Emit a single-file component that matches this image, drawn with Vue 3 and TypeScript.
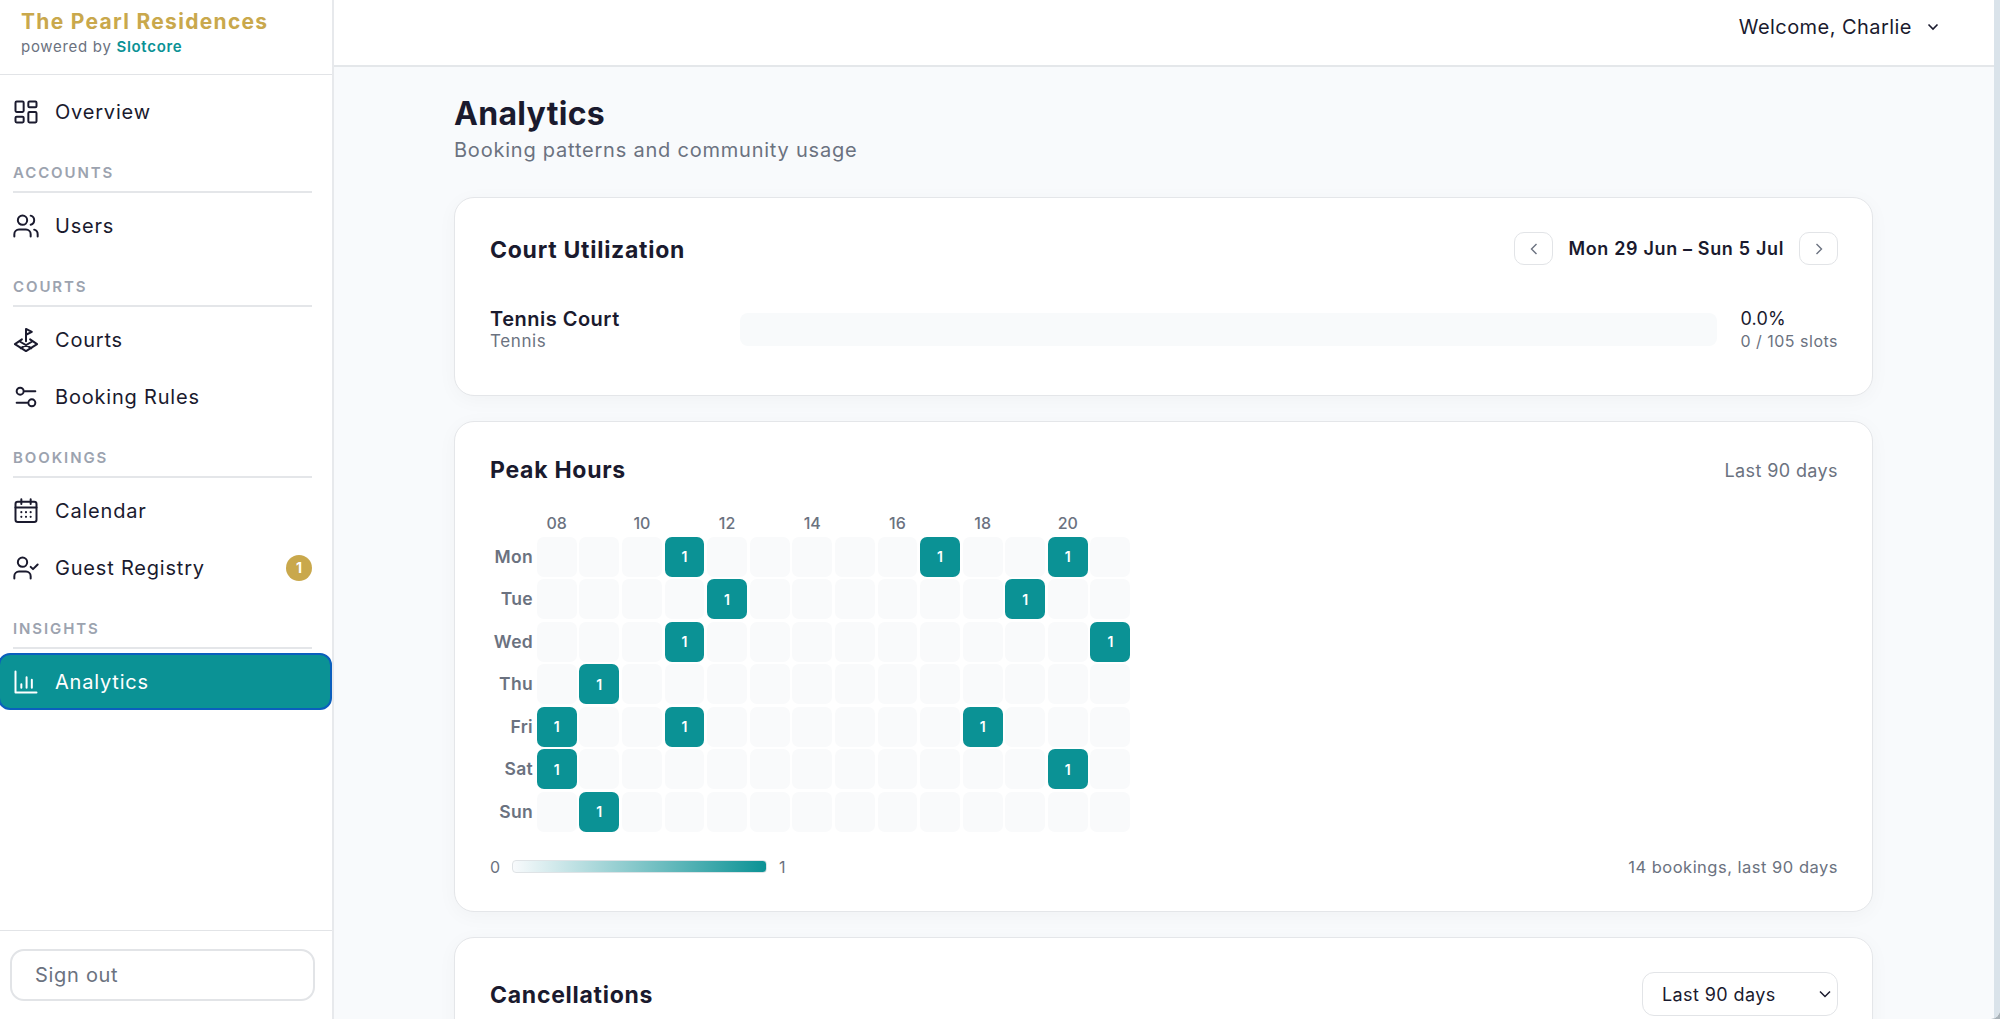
<script setup lang="ts">
const hours = Array.from({ length: 14 }, (_, i) => i + 8)

const heat: { day: string; booked: number[] }[] = [
  { day: 'Mon', booked: [11, 17, 20] },
  { day: 'Tue', booked: [12, 19] },
  { day: 'Wed', booked: [11, 21] },
  { day: 'Thu', booked: [9] },
  { day: 'Fri', booked: [8, 11, 18] },
  { day: 'Sat', booked: [8, 20] },
  { day: 'Sun', booked: [9] },
]

const hourLabel = (h: number) => (h % 2 === 0 ? String(h).padStart(2, '0') : '')
</script>

<template>
  <div class="app">
    <aside class="sidebar">
      <div class="brand">
        <div class="brand-name">The Pearl Residences</div>
        <div class="brand-sub">powered by <b>Slotcore</b></div>
      </div>

      <nav class="nav">
        <a class="nav-item">
          <svg class="nav-icon" viewBox="0 0 24 24">
            <rect x="3" y="3" width="7" height="9" rx="1" />
            <rect x="14" y="3" width="7" height="5" rx="1" />
            <rect x="14" y="12" width="7" height="9" rx="1" />
            <rect x="3" y="16" width="7" height="5" rx="1" />
          </svg>
          Overview
        </a>

        <div class="nav-label">ACCOUNTS</div>
        <a class="nav-item">
          <svg class="nav-icon" viewBox="0 0 24 24">
            <path d="M16 21v-2a4 4 0 0 0-4-4H6a4 4 0 0 0-4 4v2" />
            <circle cx="9" cy="7" r="4" />
            <path d="M22 21v-2a4 4 0 0 0-3-3.87" />
            <path d="M16 3.13a4 4 0 0 1 0 7.75" />
          </svg>
          Users
        </a>

        <div class="nav-label">COURTS</div>
        <a class="nav-item">
          <svg class="nav-icon" viewBox="0 0 24 24">
            <path d="M12 13V2.500l5 2.500-5 2.500" />
            <path d="M8.500 11.500 2.500 15.500l9.500 6 9.500-6-6-4" />
            <path d="M7 13.500l9.500 5.500M17 13.500 7.500 19" />
          </svg>
          Courts
        </a>
        <a class="nav-item">
          <svg class="nav-icon" viewBox="0 0 24 24">
            <path d="M11 7h9M4 17h9" />
            <circle cx="7" cy="7" r="3" />
            <circle cx="17" cy="17" r="3" />
          </svg>
          Booking Rules
        </a>

        <div class="nav-label">BOOKINGS</div>
        <a class="nav-item">
          <svg class="nav-icon" viewBox="0 0 24 24">
            <rect x="3" y="4" width="18" height="17.500" rx="2" />
            <path d="M3 9h18M8 2v4M16 2v4" />
            <path class="dots" d="M8 13h.01M12 13h.01M16 13h.01M8 17h.01M12 17h.01M16 17h.01" />
          </svg>
          Calendar
        </a>
        <a class="nav-item">
          <svg class="nav-icon" viewBox="0 0 24 24">
            <path d="M16 21v-2a4 4 0 0 0-4-4H6a4 4 0 0 0-4 4v2" />
            <circle cx="9" cy="7" r="4" />
            <path d="m16 11 2 2 4-4" />
          </svg>
          Guest Registry
          <span class="badge">1</span>
        </a>

        <div class="nav-label">INSIGHTS</div>
        <a class="nav-item active">
          <svg class="nav-icon" viewBox="0 0 24 24">
            <path d="M3 3v18h18" />
            <path d="M8 17v-3M12.500 17V8M17 17v-7" />
          </svg>
          Analytics
        </a>
      </nav>

      <div class="sidebar-foot">
        <button class="signout" type="button">Sign out</button>
      </div>
    </aside>

    <div class="main">
      <header class="topbar">
        <span class="welcome">Welcome, Charlie</span>
        <svg class="chevron" viewBox="0 0 12 8">
          <path d="M1.500 1.500 6 6l4.500-4.500" />
        </svg>
      </header>

      <main class="content">
        <h1>Analytics</h1>
        <p class="subtitle">Booking patterns and community usage</p>

        <section class="card">
          <div class="card-head util-head">
            <h2>Court Utilization</h2>
            <div class="week-nav">
              <button class="week-btn" type="button">
                <svg viewBox="0 0 10 16"><path d="M7.500 3 2.500 8l5 5" /></svg>
              </button>
              <span class="week">Mon 29 Jun – Sun 5 Jul</span>
              <button class="week-btn" type="button">
                <svg viewBox="0 0 10 16"><path d="m2.500 3 5 5-5 5" /></svg>
              </button>
            </div>
          </div>
          <div class="util-row">
            <div class="util-name">
              <strong>Tennis Court</strong>
              <span>Tennis</span>
            </div>
            <div class="util-bar"></div>
            <div class="util-num">
              <span class="pct">0.0%</span>
              <span class="slots">0 / 105 slots</span>
            </div>
          </div>
        </section>

        <section class="card">
          <div class="card-head peak-head">
            <h2>Peak Hours</h2>
            <span class="range">Last 90 days</span>
          </div>
          <div class="heat">
            <span></span>
            <span v-for="h in hours" :key="h" class="hour">{{ hourLabel(h) }}</span>
            <template v-for="row in heat" :key="row.day">
              <span class="day">{{ row.day }}</span>
              <span
                v-for="h in hours"
                :key="h"
                class="cell"
                :class="{ on: row.booked.includes(h) }"
              >{{ row.booked.includes(h) ? 1 : '' }}</span>
            </template>
          </div>
          <div class="legend">
            <span class="legend-num">0</span>
            <span class="legend-bar"></span>
            <span class="legend-num">1</span>
            <span class="legend-total">14 bookings, last 90 days</span>
          </div>
        </section>

        <section class="card">
          <div class="card-head cancel-head">
            <h2>Cancellations</h2>
            <div class="select">
              Last 90 days
              <svg viewBox="0 0 12 8"><path d="M1 1.500 6 6.500l5-5" /></svg>
            </div>
          </div>
        </section>
      </main>
    </div>

    <div class="edge"></div>
  </div>
</template>

<style>
body {
  background: #a9b2b8;
}
</style>

<style scoped>
.app {
  display: flex;
  height: 1019px;
  overflow: hidden;
  border-bottom-right-radius: 9px;
  background: #f8fafc;
  color: #1a1a2e;
  font-family: Inter, "Noto Sans", sans-serif;
}

.sidebar {
  flex: 0 0 334px;
  box-sizing: border-box;
  display: flex;
  flex-direction: column;
  background: #fff;
  border-right: 2px solid #e7e9ec;
}

.brand {
  height: 74px;
  padding-left: 21px;
  border-bottom: 1px solid #e2e4e7;
}

.brand-name {
  padding-top: 8.500px;
  font-size: 21px;
  line-height: 26px;
  font-weight: 700;
  letter-spacing: 1.3px;
  color: #c9a84c;
}

.brand-sub {
  margin-top: 2px;
  font-size: 15px;
  line-height: 20px;
  letter-spacing: 0.7px;
  color: #6b7280;
}

.brand-sub b {
  font-weight: 600;
  color: #0b9295;
}

.nav {
  display: flex;
  flex-direction: column;
  padding: 8px 20px 0 13px;
}

.nav-item {
  display: flex;
  align-items: center;
  gap: 15px;
  height: 57px;
  flex: none;
  margin-left: -1px;
  font-size: 20px;
  letter-spacing: 0.8px;
  color: #1a1a2e;
}

.nav-icon {
  width: 28px;
  height: 28px;
  flex: none;
  fill: none;
  stroke: currentColor;
  stroke-width: 1.7;
  stroke-linecap: round;
  stroke-linejoin: round;
}

.nav-icon .dots {
  stroke-width: 1.8;
}

.nav-label {
  margin: 22.500px 0 4.500px;
  padding-bottom: 8px;
  border-bottom: 2px solid #e4e6e9;
  font-size: 15px;
  line-height: 20px;
  font-weight: 600;
  letter-spacing: 1.9px;
  color: #9ca3af;
}

.badge {
  margin-left: auto;
  width: 26px;
  height: 26px;
  border-radius: 50%;
  display: flex;
  align-items: center;
  justify-content: center;
  background: #c9a84c;
  color: #fff;
  font-size: 14px;
  font-weight: 700;
  letter-spacing: 0;
}

.nav-item.active {
  box-sizing: border-box;
  margin: 0 -20px 0 -15px;
  padding-left: 12px;
  background: #0b9295;
  border: 2px solid #0b5fbd;
  border-radius: 12px;
  color: #fff;
}

.sidebar-foot {
  margin-top: auto;
  padding: 18px 17px 18px 10px;
  border-top: 1px solid #e2e4e7;
}

.signout {
  display: block;
  width: 100%;
  height: 52px;
  box-sizing: border-box;
  padding: 0 0 0 23px;
  text-align: left;
  background: #fff;
  border: 2px solid #e2e4e7;
  border-radius: 14px;
  font: inherit;
  font-size: 20px;
  letter-spacing: 0.7px;
  color: #6b7280;
}

.main {
  flex: 1;
  min-width: 0;
}

.edge {
  flex: 0 0 6px;
  background: #dae3ea;
}

.topbar {
  height: 53px;
  display: flex;
  align-items: center;
  justify-content: flex-end;
  gap: 15px;
  padding: 0 55px 12px 0;
  background: #fff;
  border-bottom: 2px solid #e4e7ea;
}

.welcome {
  font-size: 20px;
  letter-spacing: 0.45px;
  color: #1a1a2e;
}

.chevron {
  width: 12px;
  height: 8px;
  fill: none;
  stroke: #1a1a2e;
  stroke-width: 1.6;
}

.content {
  padding: 28px 121px 0 120px;
}

h1 {
  margin: 0;
  font-size: 32px;
  line-height: 38px;
  font-weight: 700;
  letter-spacing: 0.3px;
  color: #1a1a2e;
}

.subtitle {
  margin: 4px 0 34px;
  font-size: 20px;
  line-height: 26px;
  letter-spacing: 0.78px;
  color: #6b7280;
}

.card {
  margin-bottom: 25px;
  padding: 34px 34px 34px 35px;
  background: #fff;
  border: 1px solid #e4e6e9;
  border-radius: 20px;
  box-shadow: 0 4px 20px rgba(0, 0, 0, 0.035);
}

.card-head {
  display: flex;
  align-items: center;
  justify-content: space-between;
}

h2 {
  margin: 0;
  font-size: 23px;
  line-height: 28px;
  font-weight: 700;
  letter-spacing: 0.73px;
  color: #1a1a2e;
}

.util-head h2,
.cancel-head h2 {
  margin-top: 2px;
}

.util-head {
  height: 33px;
  margin-bottom: 41px;
}

.week-nav {
  display: flex;
  align-items: center;
  gap: 15px;
}

.week-btn {
  width: 39px;
  height: 33px;
  padding: 0;
  display: flex;
  align-items: center;
  justify-content: center;
  background: #fff;
  border: 1px solid #e2e4e7;
  border-radius: 10px;
}

.week-btn svg {
  width: 10px;
  height: 16px;
  fill: none;
  stroke: #6b7280;
  stroke-width: 1.4;
}

.week {
  font-size: 18px;
  font-weight: 600;
  letter-spacing: 0.65px;
  color: #1a1a2e;
}

.util-row {
  display: flex;
  align-items: center;
  height: 46px;
  margin-bottom: 9px;
}

.util-name {
  flex: 0 0 250px;
  display: flex;
  flex-direction: column;
}

.util-name strong {
  font-size: 20px;
  line-height: 24px;
  font-weight: 600;
  letter-spacing: 0.5px;
}

.util-name span {
  font-size: 17px;
  line-height: 20px;
  letter-spacing: 0.6px;
  color: #6b7280;
}

.util-bar {
  flex: 1;
  height: 33px;
  border-radius: 8px;
  background: #f8fafb;
}

.util-num {
  flex: 0 0 97px;
  margin-left: 23px;
  display: flex;
  flex-direction: column;
}

.pct {
  font-size: 18px;
  line-height: 24px;
  letter-spacing: 0.2px;
  color: #1a1a2e;
}

.slots {
  font-size: 16px;
  line-height: 20px;
  letter-spacing: 0.5px;
  white-space: nowrap;
  color: #6b7280;
}

.range {
  font-size: 18px;
  letter-spacing: 0.4px;
  color: #6b7280;
}

.peak-head {
  margin-bottom: 30px;
}

.heat {
  display: grid;
  grid-template-columns: 44px repeat(14, 39.85px);
  grid-template-rows: 20px repeat(7, 39.75px);
  gap: 2.75px;
  font-size: 16px;
  font-weight: 500;
  color: #6b7280;
}

.hour {
  white-space: nowrap;
  text-align: center;
  line-height: 18px;
}

.day {
  padding-right: 1px;
  text-align: right;
  font-size: 17.500px;
  line-height: 39.75px;
  font-weight: 600;
  letter-spacing: 0.3px;
}

.cell {
  display: flex;
  align-items: center;
  justify-content: center;
  border-radius: 7px;
  background: #f9fafb;
  color: #fff;
  font-size: 14px;
  font-weight: 600;
}

.cell.on {
  background: #0b9295;
}

.legend {
  display: flex;
  align-items: center;
  height: 21px;
  margin-top: 24.500px;
}

.legend-num {
  font-size: 16px;
  color: #6b7280;
}

.legend-bar {
  width: 255px;
  height: 13px;
  box-sizing: border-box;
  margin: 0 12px;
  border-radius: 4px;
  border: 1px solid #dfe3e6;
  background: linear-gradient(90deg, #f8fafc, #0b9295);
}

.legend-total {
  margin-left: auto;
  font-size: 16.500px;
  letter-spacing: 0.5px;
  color: #6b7280;
}

.select {
  width: 196px;
  height: 44px;
  box-sizing: border-box;
  padding: 0 6px 0 19px;
  display: flex;
  align-items: center;
  justify-content: space-between;
  background: #fff;
  border: 1px solid #e2e4e7;
  border-radius: 12px;
  font-size: 18px;
  letter-spacing: 0.4px;
}

.select svg {
  width: 12px;
  height: 8px;
  fill: none;
  stroke: #1a1a2e;
  stroke-width: 1.5;
}
</style>
